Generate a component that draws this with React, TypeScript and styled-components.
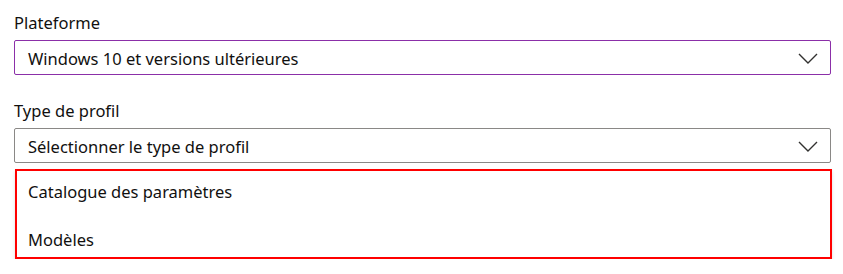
import React from 'react'
import styled, { createGlobalStyle } from 'styled-components'

const GlobalStyle = createGlobalStyle`
  html, body {
    margin: 0;
    padding: 0;
    background: #fff;
  }
  body {
    font-family: 'Segoe UI', 'Noto Sans', 'Liberation Sans', sans-serif;
    color: #11100f;
  }
`

const Page = styled.div`
  width: 817px;
  padding: 13px 12px 0 14px;
  display: flex;
  flex-direction: column;
`

const Field = styled.div<{ $spaced?: boolean }>`
  display: flex;
  flex-direction: column;
  margin-top: ${(p) => (p.$spaced ? '26px' : '0')};
`

const Label = styled.label`
  font-size: 16.5px;
  line-height: 20px;
  margin-bottom: 7px;
`

const Select = styled.div<{ $focused?: boolean }>`
  box-sizing: border-box;
  height: 35px;
  border: 1px solid ${(p) => (p.$focused ? '#8b2fa8' : '#8a8886')};
  border-radius: 2px;
  display: flex;
  align-items: flex-start;
  justify-content: space-between;
  padding: 8px 12px 0 13px;
  font-size: 16.5px;
  line-height: 20px;
`

const Chevron = styled.svg`
  width: 20px;
  height: 11px;
  margin-top: 4px;
  flex: none;
`

const Menu = styled.div`
  margin-top: 6px;
  margin-left: 1px;
  width: 817px;
  box-sizing: border-box;
  border: 2px solid #ff0000;
  background: #fff;
  box-shadow: 0 1.6px 3.6px rgba(0, 0, 0, 0.13), 0 0.3px 0.9px rgba(0, 0, 0, 0.11);
  display: flex;
  flex-direction: column;
  gap: 28px;
  padding: 11px 11px 7px;
`

const Option = styled.div`
  font-size: 16.5px;
  line-height: 20px;
`

const ChevronIcon = () => (
  <Chevron viewBox="0 0 20 11">
    <polyline points="1,1 10,10 19,1" fill="none" stroke="#323130" strokeWidth="1.4" />
  </Chevron>
)

export default function App() {
  return (
    <>
      <GlobalStyle />
      <Page>
        <Field>
          <Label>Plateforme</Label>
          <Select $focused>
            <span>Windows 10 et versions ultérieures</span>
            <ChevronIcon />
          </Select>
        </Field>
        <Field $spaced>
          <Label>Type de profil</Label>
          <Select>
            <span>Sélectionner le type de profil</span>
            <ChevronIcon />
          </Select>
        </Field>
        <Menu>
          <Option>Catalogue des paramètres</Option>
          <Option>Modèles</Option>
        </Menu>
      </Page>
    </>
  )
}
